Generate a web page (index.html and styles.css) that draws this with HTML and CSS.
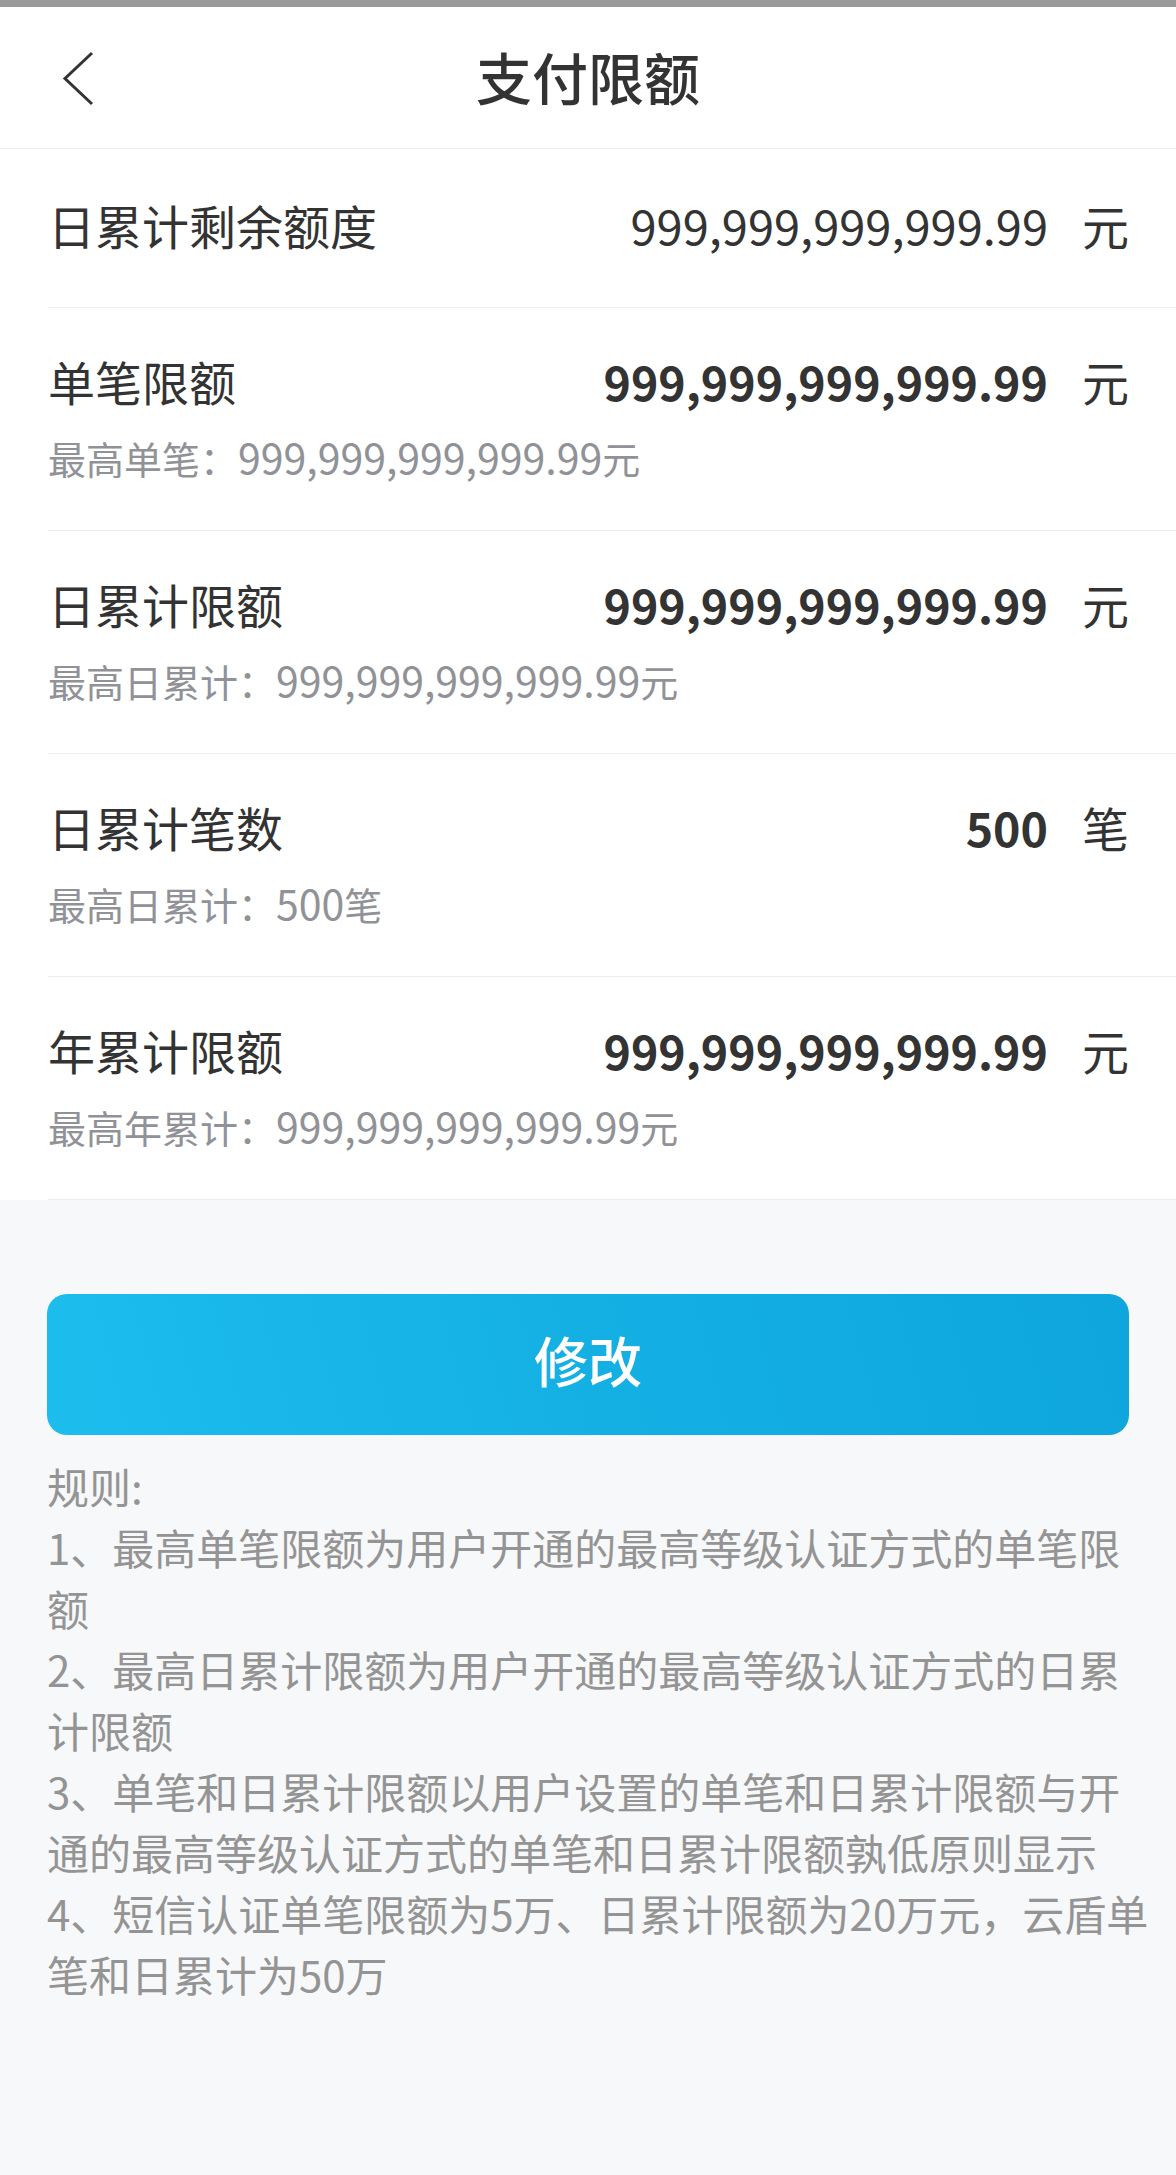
FILE: index.html
```html
<!DOCTYPE html>
<html lang="zh-CN">
<head>
<meta charset="utf-8">
<title>支付限额</title>
<link rel="stylesheet" href="styles.css">
</head>
<body>
<div class="statusbar"></div>
<header class="nav">
  <span class="back">
    <svg width="34" height="56" viewBox="0 0 34 56"><polyline points="30,3 3,28.5 30,54" fill="none" stroke="#333" stroke-width="3"/></svg>
  </span>
  <h1 class="title">支付限额</h1>
</header>
<section class="list">
  <div class="row row-single">
    <div class="line">
      <span class="label">日累计剩余额度</span>
      <span class="amount"><span class="num">999,999,999,999.99</span><span class="unit">元</span></span>
    </div>
  </div>
  <div class="row">
    <div class="line">
      <span class="label">单笔限额</span>
      <span class="amount"><span class="num bold">999,999,999,999.99</span><span class="unit">元</span></span>
    </div>
    <div class="sub">最高单笔：<span class="sub-num">999,999,999,999.99</span>元</div>
  </div>
  <div class="row">
    <div class="line">
      <span class="label">日累计限额</span>
      <span class="amount"><span class="num bold">999,999,999,999.99</span><span class="unit">元</span></span>
    </div>
    <div class="sub">最高日累计：<span class="sub-num">999,999,999,999.99</span>元</div>
  </div>
  <div class="row">
    <div class="line">
      <span class="label">日累计笔数</span>
      <span class="amount"><span class="num bold">500</span><span class="unit">笔</span></span>
    </div>
    <div class="sub">最高日累计：<span class="sub-num">500</span>笔</div>
  </div>
  <div class="row">
    <div class="line">
      <span class="label">年累计限额</span>
      <span class="amount"><span class="num bold">999,999,999,999.99</span><span class="unit">元</span></span>
    </div>
    <div class="sub">最高年累计：<span class="sub-num">999,999,999,999.99</span>元</div>
  </div>
</section>
<main class="bottom">
  <button class="btn">修改</button>
  <div class="rules">
    <p>规则:</p>
    <p>1、最高单笔限额为用户开通的最高等级认证方式的单笔限额</p>
    <p>2、最高日累计限额为用户开通的最高等级认证方式的日累计限额</p>
    <p>3、单笔和日累计限额以用户设置的单笔和日累计限额与开通的最高等级认证方式的单笔和日累计限额孰低原则显示</p>
    <p>4、短信认证单笔限额为5万、日累计限额为20万元，云盾单笔和日累计为50万</p>
  </div>
</main>
</body>
</html>
```
FILE: styles.css
```css
* { box-sizing: border-box; }
html, body {
  margin: 0;
  padding: 0;
}
body {
  width: 1176px;
  min-height: 2175px;
  background: #f7f8fa;
  font-family: "Noto Sans CJK SC", "Noto Sans", sans-serif;
  color: #333;
}
.statusbar {
  height: 7px;
  background: #9a9a9a;
}
.nav {
  height: 142px;
  padding-bottom: 4px;
  background: #fff;
  border-bottom: 1px solid #ededed;
  display: flex;
  align-items: center;
  justify-content: center;
  position: relative;
}
.back {
  position: absolute;
  left: 62px;
  top: 43px;
  width: 34px;
  height: 56px;
  display: block;
}
.back svg { display: block; }
.title {
  margin: 0;
  font-size: 56px;
  font-weight: 500;
  line-height: 64px;
  color: #333;
}
.list {
  background: #fff;
  padding-left: 48px;
}
.row {
  padding: 41px 47px 46px 0;
  border-bottom: 1px solid #ececec;
}
.row-single {
  padding-top: 44px;
  padding-bottom: 50px;
}
.line {
  display: flex;
  justify-content: space-between;
  align-items: center;
  height: 64px;
}
.label {
  font-size: 47px;
  line-height: 64px;
  color: #333;
}
.amount {
  display: flex;
  align-items: center;
  gap: 34px;
}
.num {
  font-size: 47px;
  line-height: 64px;
  color: #333;
}
.num.bold {
  font-weight: 700;
  font-size: 46.5px;
}
.unit {
  font-size: 47px;
  line-height: 64px;
  color: #333;
}
.sub {
  margin-top: 19px;
  height: 52px;
  font-size: 38px;
  line-height: 52px;
  color: #909297;
  white-space: nowrap;
}
.sub-num {
  font-size: 41px;
  line-height: 1;
}
.bottom {
  padding: 94px 0 0 47px;
}
.btn {
  display: flex;
  align-items: center;
  justify-content: center;
  width: 1082px;
  height: 141px;
  border: 0;
  border-radius: 20px;
  background: linear-gradient(75deg, #1dbdee 0%, #14b0e4 50%, #0ea6dd 100%);
  color: #fff;
  font-family: "Noto Sans CJK SC", sans-serif;
  font-size: 54px;
  font-weight: 500;
  padding: 0 0 10px 0;
  margin: 0;
}
.rules {
  margin-top: 20px;
  width: 1105px;
  font-size: 42px;
  line-height: 61px;
  color: #949494;
}
.rules p {
  margin: 0;
}
```
